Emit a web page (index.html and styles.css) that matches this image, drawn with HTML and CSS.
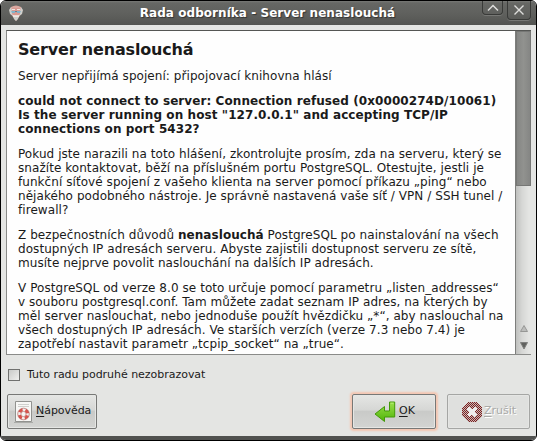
FILE: index.html
```html
<!DOCTYPE html>
<html lang="cs">
<head>
<meta charset="utf-8">
<title>Rada odborníka - Server nenaslouchá</title>
<link rel="stylesheet" href="styles.css">
</head>
<body>
<div class="window">
  <header class="titlebar">
    <svg class="app-icon" width="16" height="17" viewBox="0 0 16 17">
      <path d="M3 2Q8-1 13 2L14 8L11 12L8 16L5 12L2 8Z" fill="#dba8a0"/>
      <path d="M3 2L4 7L6 10H10L12 7L13 2L15 5L14 9L11 11L10 14L8 16L6 14L5 11L2 9L1 5Z" fill="#d0cfcb"/>
      <path d="M4 3H12L12 9L10 11H6L4 9Z" fill="#d99a92"/>
      <path d="M4 4.5H7M9 4.5H12" stroke="#efe6e3"/>
      <path d="M3 6H7V8H4ZM9 6H13L12 8H9Z" fill="#83b4ca"/>
      <path d="M7 6.5H9" stroke="#5e8294"/>
      <path d="M5 11H11" stroke="#f2f1ed" stroke-width="1.4"/>
    </svg>
    <h1>Rada odborníka - Server nenaslouchá</h1>
    <div class="controls">
      <span class="control roll"><svg width="12" height="8" viewBox="0 0 12 8"><path d="M1 6.5L6 1.5L11 6.5" fill="none" stroke="#dededc" stroke-width="1.5"/></svg></span>
      <span class="control close"><svg width="12" height="12" viewBox="0 0 12 12"><path d="M1.5 1.5L10.5 10.5M10.5 1.5L1.5 10.5" stroke="#dededc" stroke-width="1.4"/></svg></span>
    </div>
  </header>
  <main class="content">
    <section class="viewer">
      <article class="hint">
        <h2>Server nenaslouchá</h2>
        <p>Server nepřijímá spojení: připojovací knihovna hlásí</p>
        <p class="error">could not connect to server: Connection refused (0x0000274D/10061)<br>Is the server running on host "127.0.0.1" and accepting TCP/IP<br>connections on port 5432?</p>
        <p>Pokud jste narazili na toto hlášení, zkontrolujte prosím, zda na serveru, který se<br>snažíte kontaktovat, běží na příslušném portu PostgreSQL. Otestujte, jestli je<br>funkční síťové spojení z vašeho klienta na server pomocí příkazu „ping“ nebo<br>nějakého podobného nástroje. Je správně nastavená vaše síť / VPN / SSH tunel /<br>firewall?</p>
        <p>Z bezpečnostních důvodů <b>nenaslouchá</b> PostgreSQL po nainstalování na všech<br>dostupných IP adresách serveru. Abyste zajistili dostupnost serveru ze sítě,<br>musíte nejprve povolit naslouchání na dalších IP adresách.</p>
        <p>V PostgreSQL od verze 8.0 se toto určuje pomocí parametru „listen_addresses“<br>v souboru postgresql.conf. Tam můžete zadat seznam IP adres, na kterých by<br>měl server naslouchat, nebo jednoduše použít hvězdičku „*“, aby naslouchal na<br>všech dostupných IP adresách. Ve starších verzích (verze 7.3 nebo 7.4) je<br>zapotřebí nastavit parametr „tcpip_socket“ na „true“.</p>
      </article>
      <div class="scrollbar">
        <div class="thumb"></div>
        <svg width="10" height="7" viewBox="0 0 10 7"><path d="M5 .5L8.5 6.5H1.5Z" fill="#bcbdbb" stroke="#969795"/></svg>
        <svg class="down" width="10" height="8" viewBox="0 0 10 8"><path d="M1.5 .5H8.5L5 7Z" fill="#61625f" stroke="#7f807e"/></svg>
      </div>
    </section>
    <label class="option"><span class="checkbox"></span>Tuto radu podruhé nezobrazovat</label>
    <footer class="actions">
      <div class="button help">
        <svg width="19" height="22" viewBox="0 0 19 22">
          <path d="M1.5 .5H17.5V20.5H1.5Z" fill="#f7f7f5" stroke="#91928f"/>
          <path d="M0 21.5H19" stroke="#aaaba8"/>
          <path d="M4 3.5H15M4 5.5H15" stroke="#cfd0cd"/>
          <circle cx="9.5" cy="13" r="4.3" fill="none" stroke="#f5eeec" stroke-width="3.2"/>
          <circle cx="9.5" cy="13" r="4.3" fill="none" stroke="#d9534d" stroke-width="3" stroke-dasharray="3.8 2.95" stroke-dashoffset="-1.5"/>
          <circle cx="9.5" cy="13" r="5.8" fill="none" stroke="#a45450" stroke-width=".6"/>
          <circle cx="9.5" cy="13" r="2.6" fill="#f7f7f5" stroke="#a45450" stroke-width=".6"/>
        </svg>
        <span><u>N</u>ápověda</span>
      </div>
      <div class="button ok">
        <svg width="22" height="22" viewBox="0 0 22 22">
          <defs><linearGradient id="g" x1="0" y1="0" x2="0" y2="1"><stop offset="0" stop-color="#9be04d"/><stop offset="1" stop-color="#4fb408"/></linearGradient></defs>
          <path d="M15.5 1H20.7V16H10.5V20.5L1 13L10.5 5.5V10H15.5Z" fill="url(#g)" stroke="#429908" stroke-linejoin="round"/>
          <path d="M16.6 2.2H19.5" stroke="#b7ed7c"/>
        </svg>
        <span><u>O</u>K</span>
      </div>
      <div class="button cancel">
        <svg width="20" height="20" viewBox="0 0 20 20" shape-rendering="crispEdges">
          <defs>
            <pattern id="d" width="2" height="2" patternUnits="userSpaceOnUse"><path d="M0 0H1V1H0ZM1 1H2V2H1Z" fill="#7d1f1f"/></pattern>
          </defs>
          <path d="M6 0H14L20 6V14L14 20H6L0 14V6Z" fill="#c6b9b7"/>
          <path d="M6 0H14L20 6V14L14 20H6L0 14V6Z" fill="url(#d)"/>
          <path d="M6 6L14 14M14 6L6 14" stroke="#eeeceb" stroke-width="3.4"/>
        </svg>
        <span><u>Z</u>rušit</span>
      </div>
    </footer>
  </main>
</div>
</body>
</html>
```
FILE: styles.css
```css
* { box-sizing: border-box; }
body {
  margin: 0;
  background: #fff;
  font: 12px/14px "DejaVu Sans", sans-serif;
  color: #1a1a1a;
}
svg { display: block; flex: none; }
.window {
  width: 537px;
  height: 441px;
  border: 1px solid #000;
  border-radius: 6px;
  background: #e4e5e3;
  overflow: hidden;
  display: flex;
  flex-direction: column;
}
.titlebar {
  height: 24px;
  flex: none;
  display: grid;
  grid-template-columns: 65px 1fr 67px;
  background: linear-gradient(#777875 0, #666764 2px, #5f605d 55%, #535451);
  color: #fff;
}
.app-icon { margin: 4px 0 0 7px; }
h1 {
  margin: 5px 0 0;
  font-size: 12px;
  line-height: 15px;
  letter-spacing: .05px;
  text-align: center;
  white-space: nowrap;
  text-shadow: 1px 1px 1px #333;
}
.controls { display: flex; align-items: flex-start; justify-content: flex-end; gap: 4px; padding-right: 5px; }
.control {
  border: 1px solid #393a38;
  border-top: 0;
  border-radius: 0 0 4px 4px;
  box-shadow: 0 1px #777875;
  display: flex;
  align-items: center;
  justify-content: center;
}
.roll { width: 21px; height: 14px; }
.close { width: 24px; height: 19px; }
.content {
  flex: 1;
  padding: 5px 5px 0;
  border-bottom: 4px solid #50514f;
}
.viewer {
  height: 325px;
  display: flex;
  border: 1px solid #8a8b89;
  border-top-color: #555654;
  border-right: 0;
  background: #fefefe;
  overflow: hidden;
}
.hint { flex: 1; padding: 9px 0 0 11px; letter-spacing: .06px; white-space: nowrap; overflow: hidden; }
h2 { margin: 0 0 10px; font-size: 16px; line-height: 19px; letter-spacing: -.17px; }
p { margin: 0 0 11px; }
.error { font-weight: bold; letter-spacing: .08px; }
.scrollbar {
  width: 16px;
  display: flex;
  flex-direction: column;
  align-items: center;
  border-left: 1px solid #7d7e7c;
  background: linear-gradient(90deg, #bfc0be, #d6d7d5 6px, #e4e5e3 13px);
}
.thumb {
  width: 15px;
  height: 155px;
  margin-bottom: 139px;
  background: linear-gradient(90deg, #858684, #91928f 50%, #858684);
  border: 1px solid #767775;
}
.down { margin-top: 10px; }
.option { display: flex; align-items: center; gap: 7px; height: 14px; margin: 13px 0 0 2px; font-size: 11px; letter-spacing: -.03px; white-space: nowrap; }
.checkbox { width: 12px; height: 12px; border: 1px solid #70716f; background: linear-gradient(135deg, #c9cac8, #f0f0ee); }
.actions { display: flex; margin: 12px 0 0 1px; }
.button {
  height: 35px;
  display: flex;
  align-items: center;
  border: 1px solid #777876;
  border-radius: 2px;
  background: linear-gradient(#e5e6e4, #d6d7d5 45%, #c9cac8 50%, #d3d4d2);
  font-size: 11px;
  box-shadow: inset 0 0 0 1px #e5e6e4;
  white-space: nowrap;
}
.button span { position: relative; top: -1px; }
.button u { text-underline-offset: 2px; }
.help { width: 90px; padding-left: 6px; gap: 3px; letter-spacing: -.05px; }
.ok { width: 84px; margin-left: 255px; padding-left: 21px; gap: 3px; box-shadow: 0 0 2px 2px #f4c6b1, inset 0 0 0 1px #e5e6e4; }
.cancel { width: 83px; margin-left: 11px; padding-left: 14px; gap: 2px; color: #a9aaa8; border-color: #a5a6a4; background: #dfe0de; text-shadow: 1px 1px #fff; }
```
